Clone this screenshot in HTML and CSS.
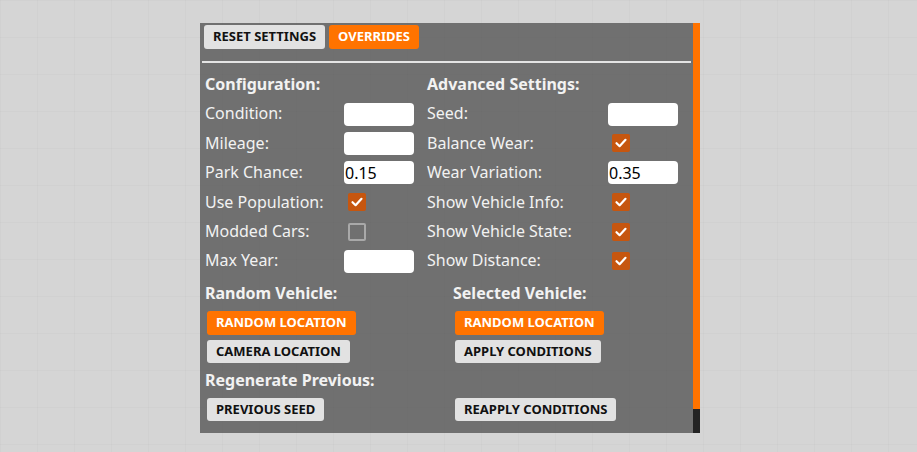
FILE: index.html
```html
<!DOCTYPE html>
<html>
<head>
    <title>Vehicle Settings</title>
    <link rel="stylesheet" href="styles.css">
</head>
<body>
    <div class="panel">
        <div class="content">
            <div class="toolbar">
                <button class="btn">Reset Settings</button>
                <button class="btn active">Overrides</button>
            </div>
            <div class="divider"></div>

            <div class="settings">
                <div class="col col-left">
                    <div class="heading">Configuration:</div>
                    <label>Condition:</label><input type="text">
                    <label>Mileage:</label><input type="text">
                    <label>Park Chance:</label><input type="text" value="0.15">
                    <label>Use Population:</label><span class="check on"><svg viewBox="0 0 18 18"><path d="M4.5 9.2 L7.6 12.2 L13.5 5.8"/></svg></span>
                    <label>Modded Cars:</label><span class="check"></span>
                    <label>Max Year:</label><input type="text">
                </div>
                <div class="col col-right">
                    <div class="heading">Advanced Settings:</div>
                    <label>Seed:</label><input type="text">
                    <label>Balance Wear:</label><span class="check on"><svg viewBox="0 0 18 18"><path d="M4.5 9.2 L7.6 12.2 L13.5 5.8"/></svg></span>
                    <label>Wear Variation:</label><input type="text" value="0.35">
                    <label>Show Vehicle Info:</label><span class="check on"><svg viewBox="0 0 18 18"><path d="M4.5 9.2 L7.6 12.2 L13.5 5.8"/></svg></span>
                    <label>Show Vehicle State:</label><span class="check on"><svg viewBox="0 0 18 18"><path d="M4.5 9.2 L7.6 12.2 L13.5 5.8"/></svg></span>
                    <label>Show Distance:</label><span class="check on"><svg viewBox="0 0 18 18"><path d="M4.5 9.2 L7.6 12.2 L13.5 5.8"/></svg></span>
                </div>
            </div>

            <div class="actions">
                <div class="group">
                    <div class="heading">Random Vehicle:</div>
                    <button class="btn active">Random Location</button>
                    <button class="btn">Camera Location</button>
                </div>
                <div class="group">
                    <div class="heading">Selected Vehicle:</div>
                    <button class="btn active">Random Location</button>
                    <button class="btn">Apply Conditions</button>
                </div>
                <div class="group">
                    <div class="heading">Regenerate Previous:</div>
                    <button class="btn">Previous Seed</button>
                </div>
                <div class="group">
                    <div class="heading"></div>
                    <button class="btn">Reapply Conditions</button>
                </div>
            </div>
        </div>
        <div class="scrollbar">
            <div class="thumb"></div>
        </div>
    </div>
</body>
</html>
```

FILE: styles.css
```css
body {
    margin: 0;
    font-family: "Noto Sans", "Open Sans", sans-serif;
    background-color: #d5d5d5;
    background-image:
        linear-gradient(rgba(0, 0, 0, 0.018) 1px, transparent 1px),
        linear-gradient(90deg, rgba(0, 0, 0, 0.018) 1px, transparent 1px);
    background-size: 37px 37px;
}
.panel {
    display: flex;
    width: 500px;
    height: 410px;
    margin: 23px 0 0 200px;
    background-color: rgba(45, 45, 45, 0.6);
    color: #f2f2f2;
}
.content {
    flex: 1;
    overflow: hidden;
}
.scrollbar {
    width: 7px;
    background: #232323;
}
.thumb {
    height: 386px;
    background: #ff7300;
}
.toolbar {
    display: flex;
    gap: 4px;
    padding: 2px 4px 0;
}
.btn {
    height: 23.5px;
    padding: 0 9px;
    border: none;
    border-radius: 3px;
    background: #e2e2e2;
    color: #111;
    font-family: inherit;
    font-size: 13px;
    font-weight: bold;
    text-transform: uppercase;
    line-height: 23px;
    cursor: pointer;
}
.btn.active {
    background: #ff7300;
    color: #fff;
}
.divider {
    height: 2px;
    margin: 12.5px 2px 0;
    background: #e4e4e4;
}
.heading {
    min-height: 29.4px;
    font-size: 16px;
    font-weight: bold;
    line-height: 29.4px;
}
.settings {
    display: flex;
    margin-top: 7px;
    padding: 0 5px;
}
.col {
    display: grid;
    grid-auto-rows: 29.4px;
    align-items: center;
    font-size: 16px;
}
.col .heading {
    grid-column: 1 / 3;
}
.col-left {
    grid-template-columns: 139px 70px;
    width: 222px;
}
.col-right {
    grid-template-columns: 181px 70px;
}
.col label {
    line-height: 29.4px;
}
.col input {
    width: 70px;
    height: 23px;
    box-sizing: border-box;
    padding: 0 1px;
    border: none;
    border-radius: 4px;
    background: #fff;
    color: #000;
    font-family: inherit;
    font-size: 16px;
}
.check {
    display: block;
    width: 18px;
    height: 18px;
    margin-left: 4px;
    box-sizing: border-box;
    border: 2px solid #a9a9a9;
    border-radius: 2px;
}
.check.on {
    border: none;
    background: #c6560f;
}
.check svg {
    display: block;
    width: 18px;
    height: 18px;
    fill: none;
    stroke: #fff;
    stroke-width: 2.2;
    stroke-linecap: round;
    stroke-linejoin: round;
}
.actions {
    display: grid;
    grid-template-columns: 248px 1fr;
    margin-top: 3.5px;
    padding: 0 5px;
}
.group {
    display: flex;
    flex-direction: column;
    align-items: flex-start;
}
.group .btn {
    margin: 2.5px 2px;
}
```
